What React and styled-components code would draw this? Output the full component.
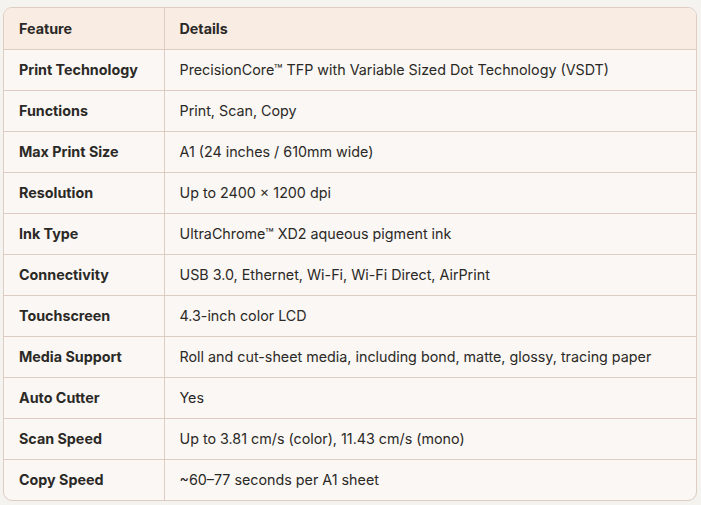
import styled, { createGlobalStyle } from 'styled-components';

const GlobalStyle = createGlobalStyle`
  html, body {
    margin: 0;
    padding: 0;
    background: #f5f3ef;
  }
  body {
    font-family: Inter, "Noto Sans", sans-serif;
    color: #2b2926;
  }
`;

const Page = styled.div`
  padding: 7px 4px 5px 3px;
`;

const Frame = styled.div`
  border: 1px solid #dcccc1;
  border-radius: 9px;
  overflow: hidden;
  background: #faf7f4;
`;

const Table = styled.table`
  width: 100%;
  border-collapse: collapse;
  font-size: 14.3px;
  line-height: 20px;

  th, td {
    height: 41px;
    padding: 0 15px;
    box-sizing: border-box;
    text-align: left;
    vertical-align: middle;
  }
  th {
    padding-top: 1px;
  }
  th:first-child, td:first-child {
    width: 160px;
    border-right: 1px solid #dcccc1;
  }
  tbody tr td {
    border-top: 1px solid #dcccc1;
  }
`;

const Head = styled.thead`
  background: #f9ece3;
  th {
    font-weight: 700;
  }
`;

const Label = styled.td`
  font-weight: 700;
`;

const rows = [
  ['Print Technology', 'PrecisionCore™ TFP with Variable Sized Dot Technology (VSDT)'],
  ['Functions', 'Print, Scan, Copy'],
  ['Max Print Size', 'A1 (24 inches / 610mm wide)'],
  ['Resolution', 'Up to 2400 × 1200 dpi'],
  ['Ink Type', 'UltraChrome™ XD2 aqueous pigment ink'],
  ['Connectivity', 'USB 3.0, Ethernet, Wi-Fi, Wi-Fi Direct, AirPrint'],
  ['Touchscreen', '4.3-inch color LCD'],
  ['Media Support', 'Roll and cut-sheet media, including bond, matte, glossy, tracing paper'],
  ['Auto Cutter', 'Yes'],
  ['Scan Speed', 'Up to 3.81 cm/s (color), 11.43 cm/s (mono)'],
  ['Copy Speed', '~60–77 seconds per A1 sheet'],
];

export default function App() {
  return (
    <>
      <GlobalStyle />
      <Page>
        <Frame>
          <Table>
            <Head>
              <tr>
                <th>Feature</th>
                <th>Details</th>
              </tr>
            </Head>
            <tbody>
              {rows.map(([k, v]) => (
                <tr key={k}>
                  <Label>{k}</Label>
                  <td>{v}</td>
                </tr>
              ))}
            </tbody>
          </Table>
        </Frame>
      </Page>
    </>
  );
}
